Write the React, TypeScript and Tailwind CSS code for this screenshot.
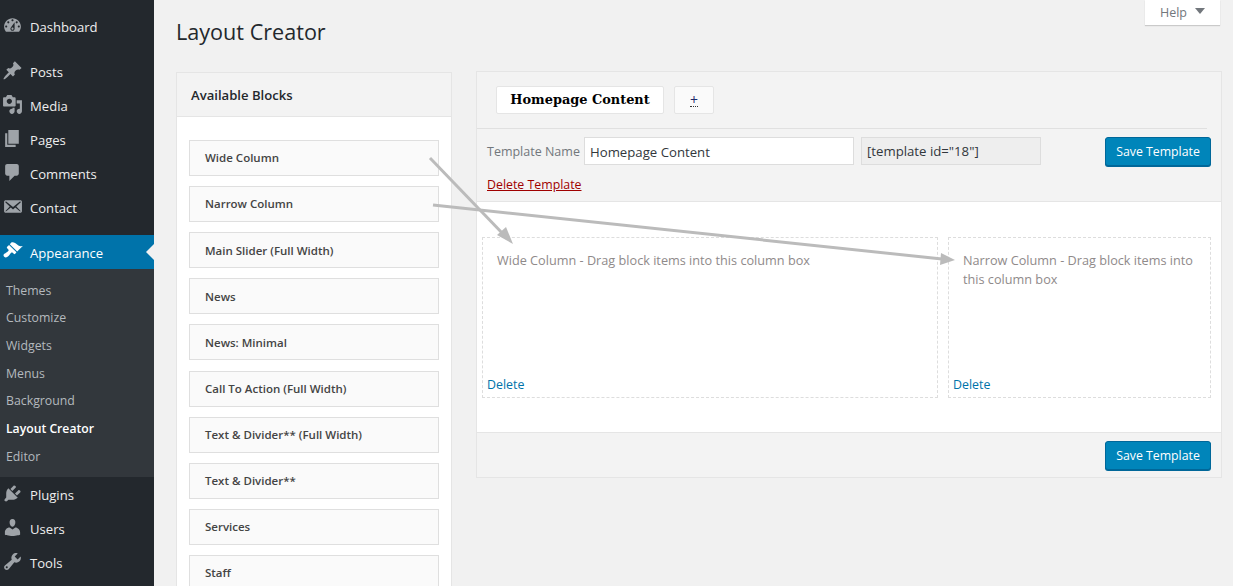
import React from "react";

const icons: Record<string, string> = {
  dashboard:
    "M3.76 16h12.48c1.1-1.37 1.76-3.11 1.76-5 0-4.42-3.58-8-8-8s-8 3.58-8 8c0 1.89.66 3.63 1.76 5zM10 4c.55 0 1 .45 1 1s-.45 1-1 1-1-.45-1-1 .45-1 1-1zM6 6c.55 0 1 .45 1 1s-.45 1-1 1-1-.45-1-1 .45-1 1-1zm8 0c.55 0 1 .45 1 1s-.45 1-1 1-1-.45-1-1 .45-1 1-1zm-5.37 5.55L12 7v6c0 1.1-.9 2-2 2s-2-.9-2-2c0-.57.24-1.08.63-1.45zM4 10c.55 0 1 .45 1 1s-.45 1-1 1-1-.45-1-1 .45-1 1-1zm12 0c.55 0 1 .45 1 1s-.45 1-1 1-1-.45-1-1 .45-1 1-1zm-5 3c0-.55-.45-1-1-1s-1 .45-1 1 .45 1 1 1 1-.45 1-1z",
  pin: "M10.44 3.02l1.82-1.82 6.36 6.35-1.83 1.82c-1.05-.68-2.48-.57-3.41.36l-.75.75c-.92.93-1.04 2.35-.35 3.41l-1.83 1.82-2.41-2.41-2.8 2.79c-.42.42-3.38 2.71-3.8 2.29s1.86-3.39 2.28-3.81l2.79-2.79L4.1 9.36l1.83-1.82c1.05.69 2.48.57 3.4-.36l.75-.75c.93-.92 1.05-2.35.36-3.41z",
  media:
    "M13 11V4c0-.55-.45-1-1-1h-1.67L9 1H5L3.67 3H2c-.55 0-1 .45-1 1v7c0 .55.45 1 1 1h10c.55 0 1-.45 1-1zM7 4.5c1.38 0 2.5 1.12 2.5 2.5S8.38 9.5 7 9.5 4.5 8.38 4.5 7 5.62 4.5 7 4.5zM14 6h5v10.5c0 1.38-1.12 2.5-2.5 2.5S14 17.88 14 16.5s1.12-2.5 2.5-2.5c.17 0 .34.02.5.05V9h-3V6zm-4 8.05V13h2v3.5c0 1.38-1.12 2.5-2.5 2.5S7 17.88 7 16.5 8.12 14 9.5 14c.17 0 .34.02.5.05z",
  page: "M6 15V2h10v13H6zm-1 1h8v2H3V5h2v11z",
  comments:
    "M5 2h9c1.1 0 2 .9 2 2v7c0 1.1-.9 2-2 2h-2l-5 5v-5H5c-1.1 0-2-.9-2-2V4c0-1.1.9-2 2-2z",
  email:
    "M19 14.5v-9c0-.83-.67-1.5-1.5-1.5H3.49c-.83 0-1.5.67-1.5 1.5v9c0 .83.67 1.5 1.5 1.5H17.5c.83 0 1.5-.67 1.5-1.5zm-1.31-9.11c.33.33.15.67-.03.84L13.6 9.95l3.9 4.06c.12.14.2.36.06.51-.13.16-.43.15-.56.05l-4.37-3.73-2.14 1.95-2.13-1.95-4.37 3.73c-.13.1-.43.11-.56-.05-.14-.15-.06-.37.06-.51l3.9-4.06-4.06-3.72c-.18-.17-.36-.51-.03-.84s.67-.17.95.07l6.24 5.04 6.25-5.04c.28-.24.62-.4.95-.07z",
  appearance:
    "M14.48 11.06L7.41 3.99l1.5-1.5c.5-.56 2.3-.47 3.51.32 1.21.8 1.43 1.28 2.91 2.1 1.18.64 2.45 1.26 4.45.85zm-.71.71L6.7 4.7 4.93 6.47c-.39.39-.39 1.02 0 1.41l1.06 1.06c.39.39.39 1.03 0 1.42-.6.6-1.43 1.11-2.21 1.69-.35.26-.7.53-1.01.84C1.43 13.23.91 14.8 2.1 16s2.76.68 4.09-.65c.31-.31.58-.66.85-1.02.57-.78 1.08-1.61 1.69-2.21.39-.39 1.02-.39 1.41 0l1.06 1.06c.39.39 1.02.39 1.41 0z",
  plugins:
    "M13.11 4.36L9.87 7.6 8 5.73l3.24-3.24c.35-.34 1.05-.2 1.56.32.52.51.66 1.21.31 1.55zm-8 1.77l.91-1.12 9.01 9.01-1.19.84c-.71.71-2.63 1.16-3.82 1.16H6.14L4.9 17.26c-.59.59-1.54.59-2.12 0-.59-.58-.59-1.53 0-2.12l1.24-1.24v-3.88c0-1.13.4-3.19 1.09-3.89zm7.26 3.97l3.24-3.24c.34-.35 1.04-.21 1.55.31.52.51.66 1.21.31 1.55l-3.24 3.25z",
  users:
    "M10 9.25c-2.27 0-2.73-3.44-2.73-3.44C7 4.02 7.82 2 9.97 2c2.16 0 2.98 2.02 2.71 3.81 0 0-.41 3.44-2.68 3.44zm0 2.57L12.72 10c2.39 0 4.52 2.33 4.52 4.53v2.49s-3.65 1.13-7.24 1.13c-3.65 0-7.24-1.13-7.24-1.13v-2.49c0-2.25 1.94-4.48 4.47-4.48z",
  tools:
    "M16.68 9.77c-1.34 1.34-3.3 1.67-4.95.99l-5.41 6.52c-.99.99-2.59.99-3.58 0s-.99-2.59 0-3.57l6.52-5.42c-.68-1.65-.35-3.61.99-4.95 1.28-1.28 3.12-1.62 4.72-1.06l-2.89 2.89 2.82 2.82 2.86-2.87c.53 1.58.18 3.39-1.08 4.65zM3.81 16.21c.4.39 1.04.39 1.43 0 .4-.4.4-1.04 0-1.43-.39-.4-1.03-.4-1.43 0-.39.39-.39 1.03 0 1.43z",
};

const blocks = [
  "Wide Column",
  "Narrow Column",
  "Main Slider (Full Width)",
  "News",
  "News: Minimal",
  "Call To Action (Full Width)",
  "Text & Divider** (Full Width)",
  "Text & Divider**",
  "Services",
  "Staff",
];

const submenu = ["Themes", "Customize", "Widgets", "Menus", "Background", "Layout Creator", "Editor"];

function Icon({ name, className }: { name: string; className: string }) {
  return (
    <svg viewBox="0 0 20 20" className={className} fill="currentColor" fillRule="evenodd">
      <path d={icons[name]} />
    </svg>
  );
}

function MenuItem({ icon, label, low }: { icon: string; label: string; low?: boolean }) {
  return (
    <a className="flex h-[34px] items-center pl-[2px] text-[13.1px] text-[#eeeeee]">
      <Icon name={icon} className="mr-[7px] -mt-[3px] size-[21px] text-[#9ea3a8]" />
      <span className={low ? "mt-[3px]" : "mt-[1px]"}>{label}</span>
    </a>
  );
}

function SaveButton() {
  return (
    <button className="h-[29px] w-[106px] rounded-[3px] border border-[#006799] bg-[#0085ba] pt-[1px] text-[12.3px] text-white shadow-[0_1px_0_#006799]">
      Save Template
    </button>
  );
}

function ColumnBox({ text, className }: { text: string; className: string }) {
  return (
    <div className={`flex h-[161px] flex-col justify-between border border-dashed border-[#dddddd] ${className}`}>
      <p className="px-[14px] pt-[13px] text-[12.7px] leading-[19px] text-[#8f8a8a]">{text}</p>
      <a className="pb-[3px] pl-[4px] text-[12.4px] leading-[18px] text-[#0073aa]">Delete</a>
    </div>
  );
}

export default function App() {
  return (
    <div className="relative flex h-[586px] overflow-hidden bg-[#f1f1f1] font-['Open_Sans',sans-serif] text-[13px] text-[#444444]">
      <aside className="w-[154px] shrink-0 bg-[#23282d] pt-[10px]">
        <MenuItem icon="dashboard" label="Dashboard" />
        <div className="h-[11px]" />
        <MenuItem icon="pin" label="Posts" />
        <MenuItem icon="media" label="Media" />
        <MenuItem icon="page" label="Pages" />
        <MenuItem icon="comments" label="Comments" />
        <MenuItem icon="email" label="Contact" />
        <div className="h-[10px]" />
        <a className="relative flex h-[34px] items-center bg-[#0073aa] pl-[2px] text-[13.1px] text-white">
          <Icon name="appearance" className="mr-[7px] -mt-[3px] size-[21px] text-white" />
          <span className="mt-[3px]">Appearance</span>
          <span className="absolute right-0 top-[9px] border-y-[8px] border-r-[8px] border-y-transparent border-r-[#f1f1f1]" />
        </a>
        <ul className="bg-[#32373c] pb-[6px] pl-[6px] pt-[8px]">
          {submenu.map((item) => (
            <li
              key={item}
              className={
                item === "Layout Creator"
                  ? "flex h-[27.67px] items-center text-[12.2px] font-semibold text-white"
                  : "flex h-[27.67px] items-center text-[12.3px] text-[#b4b9be]"
              }
            >
              {item}
            </li>
          ))}
        </ul>
        <div className="h-px" />
        <MenuItem icon="plugins" label="Plugins" low />
        <MenuItem icon="users" label="Users" low />
        <MenuItem icon="tools" label="Tools" low />
      </aside>

      <main className="flex min-w-0 flex-1 flex-col pl-[22px] pr-[11px]">
        <header className="flex h-[72px] shrink-0 items-start justify-between">
          <h1 className="mt-[16px] text-[21.6px] leading-[32px] text-[#23282d]">Layout Creator</h1>
          <div className="mr-[2px] flex h-[25px] w-[75px] items-center justify-center gap-[8px] bg-white pt-[2px] text-[12.5px] text-[#72777c] shadow-[0_1px_1px_rgba(0,0,0,0.16)]">
            Help
            <span className="mb-[5px] border-x-[5px] border-t-[6px] border-x-transparent border-t-[#72777c]" />
          </div>
        </header>

        <div className="flex items-start gap-[24px]">
          <section className="h-[600px] w-[276px] shrink-0 border border-[#e5e5e5] bg-white">
            <h2 className="flex h-[44px] items-center border-b border-[#e5e5e5] bg-[#f3f3f3] pl-[14px] pt-[2px] text-[13.1px] font-semibold text-[#23282d]">
              Available Blocks
            </h2>
            <div className="flex flex-col gap-[10.12px] px-[12px] pt-[23px]">
              {blocks.map((block) => (
                <div
                  key={block}
                  className="flex h-[36px] shrink-0 items-center border border-[#dfdfdf] bg-[#fafafa] pl-[15px] text-[11.5px] font-semibold text-[#444444]"
                >
                  {block}
                </div>
              ))}
            </div>
          </section>

          <section className="-mt-px w-[746px] border border-[#e5e5e5] bg-white">
            <div className="bg-[#f3f3f3]">
              <div className="mr-[14px] flex h-[57px] items-start gap-[10px] border-b border-[#e0e0e0] pl-[19px] pt-[14px]">
                <div className="flex h-[28px] w-[168px] items-center justify-center rounded-[2px] border border-[#e5e5e5] bg-white font-['DejaVu_Serif',serif] text-[12.9px] font-bold text-black">
                  Homepage Content
                </div>
                <div className="flex h-[28px] w-[40px] items-center justify-center rounded-[2px] border border-[#e5e5e5] bg-[#fafafa] text-[14px] text-[#1d2a6b]">
                  <span className="border-b border-dotted border-[#333333] leading-[13px]">+</span>
                </div>
              </div>
              <div className="h-[73px] border-b border-[#e5e5e5] px-[10px] pt-[8px]">
                <div className="flex items-start">
                  <span className="mr-[5px] w-[92px] whitespace-nowrap pt-[6px] text-[12.5px] text-[#72777c]">
                    Template Name
                  </span>
                  <input
                    readOnly
                    value="Homepage Content"
                    className="h-[28px] w-[270px] border border-[#dddddd] bg-white px-[5px] pt-[2px] text-[13.2px] text-[#32373c] outline-none"
                  />
                  <div className="ml-[7px] flex h-[28px] w-[180px] items-center border border-[#dddddd] bg-[#eeeeee] px-[5px] pt-[2px] text-[13.2px] text-[#32373c]">
                    [template id="18"]
                  </div>
                  <div className="ml-auto">
                    <SaveButton />
                  </div>
                </div>
                <a className="mt-[10px] block text-[12.35px] leading-[18px] text-[#a00000] underline">Delete Template</a>
              </div>
            </div>

            <div className="flex h-[230px] gap-[10px] px-[5px] pt-[35px]">
              <ColumnBox className="w-[456px]" text="Wide Column - Drag block items into this column box" />
              <ColumnBox className="w-[263px]" text="Narrow Column - Drag block items into this column box" />
            </div>

            <div className="flex h-[45px] justify-end border-t border-[#e5e5e5] bg-[#f3f3f3] pr-[10px] pt-[8px]">
              <SaveButton />
            </div>
          </section>
        </div>
      </main>

      {/* arrows drawn over the blocks */}
      <svg className="pointer-events-none absolute inset-0" width="1233" height="586" fill="#bbbbbb" stroke="none">
        <line x1="430" y1="158" x2="505" y2="236" stroke="#bbbbbb" strokeWidth="3" />
        <polygon points="513,244 497,235 506,227" />
        <line x1="433" y1="205" x2="942" y2="259" stroke="#bbbbbb" strokeWidth="3" />
        <polygon points="955,260 940,265 941,253" />
      </svg>
    </div>
  );
}
